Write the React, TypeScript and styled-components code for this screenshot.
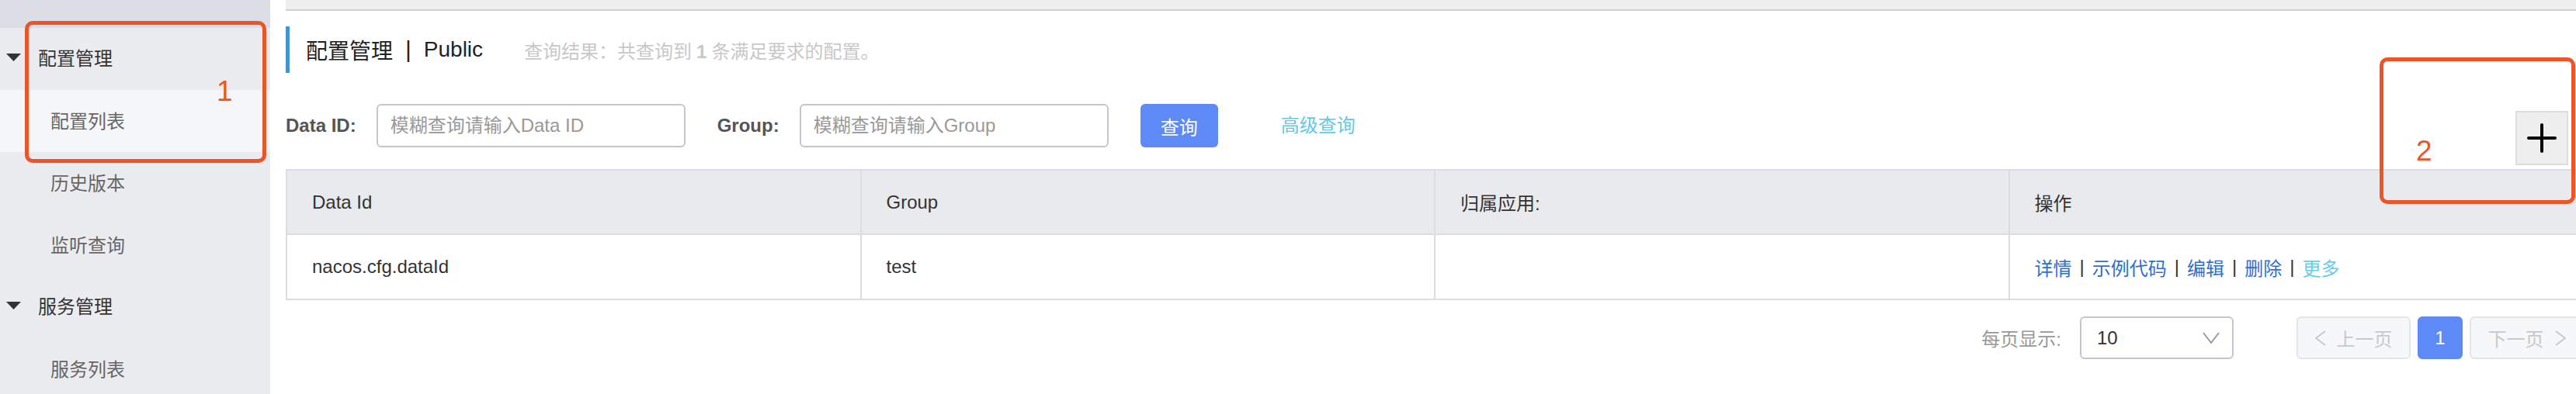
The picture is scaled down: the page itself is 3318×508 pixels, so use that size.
import React from 'react'
import styled, { createGlobalStyle } from 'styled-components'

const GlobalStyle = createGlobalStyle`
    html, body {
        margin: 0;
        padding: 0;
        background: #ffffff;
        overflow: hidden;
    }
    body {
        font-family: "Liberation Sans", "Noto Sans CJK SC", sans-serif;
    }
    * {
        box-sizing: border-box;
    }
`

const Page = styled.div`
    position: relative;
    display: flex;
    width: 3328px;
    height: 508px;
`

/* sidebar */

const Sidebar = styled.nav`
    width: 348px;
    flex-shrink: 0;
    background: #ebecf0;
`

const SidebarTop = styled.div`
    height: 36px;
    background: #dbdee5;
`

const NavGroup = styled.div`
    display: flex;
    align-items: center;
    gap: 22px;
    height: 80px;
    padding: 0 0 5px 8px;
    font-size: 24px;
    color: #333333;
`

const NavItem = styled.div<{ $active?: boolean }>`
    display: flex;
    align-items: center;
    height: 80px;
    padding: 0 0 4px 65px;
    font-size: 24px;
    color: #666666;
    background: ${(p) => (p.$active ? '#f5f6f8' : 'transparent')};
`

const Caret = () => (
    <svg width="19" height="10" viewBox="0 0 19 10">
        <polygon points="0,0 19,0 9.5,10" fill="#333333" />
    </svg>
)

/* main area */

const Main = styled.main`
    flex: 1;
    display: flex;
    flex-direction: column;
    padding-left: 20px;
`

const TopStrip = styled.div`
    height: 14px;
    background: #eeeeee;
    border-bottom: 2px solid #d0d0d0;
`

const TitleBar = styled.div`
    display: flex;
    align-items: center;
    height: 60px;
    margin-top: 20px;
    padding-left: 21px;
    border-left: 5px solid #3f95cc;
`

const TitleText = styled.span`
    font-size: 28px;
    color: #222222;
`

const TitleDivider = styled.span`
    margin: 0 16px;
    font-size: 30px;
    color: #222222;
`

const ResultText = styled.span`
    margin-left: 53px;
    font-size: 24px;
    color: #c8c8c8;

    strong {
        margin: 0 6px;
    }
`

const SearchRow = styled.div`
    display: flex;
    align-items: flex-start;
    margin-top: 40px;
`

const FieldLabel = styled.label`
    margin-right: 26px;
    font-size: 24px;
    font-weight: bold;
    line-height: 56px;
    color: #555555;
`

const TextInput = styled.input`
    width: 398px;
    height: 56px;
    margin-right: 41px;
    padding: 0 16px;
    border: 2px solid #c4c6cf;
    border-radius: 6px;
    font-family: inherit;
    font-size: 24px;
    color: #333333;
    outline: none;

    &::placeholder {
        color: #999999;
    }
`

const PrimaryButton = styled.button`
    width: 100px;
    height: 56px;
    border: none;
    border-radius: 6px;
    background: #5e8af7;
    color: #ffffff;
    font-family: inherit;
    font-size: 24px;
`

const LinkText = styled.a`
    margin-left: 81px;
    font-size: 24px;
    line-height: 56px;
    color: #66c8e3;
`

const AddButton = styled.button`
    display: flex;
    align-items: center;
    justify-content: center;
    width: 68px;
    height: 70px;
    margin: 9px 20px 0 auto;
    padding: 0;
    border: 2px solid #dddddd;
    background: #eeeeee;
`

const PlusIcon = () => (
    <svg width="38" height="38" viewBox="0 0 38 38">
        <path d="M19 2 V36 M2 19 H36" stroke="#000000" strokeWidth="4" strokeLinecap="round" />
    </svg>
)

/* table */

const Table = styled.div`
    display: grid;
    grid-template-columns: repeat(4, 1fr);
    margin-top: 5px;
    border-top: 2px solid #dcdde2;
    border-left: 2px solid #dcdde2;
`

const Cell = styled.div<{ $head?: boolean }>`
    display: flex;
    align-items: center;
    height: ${(p) => (p.$head ? '83px' : '84px')};
    padding-left: 32px;
    border-right: 2px solid #dcdde2;
    border-bottom: 2px solid #dcdde2;
    background: ${(p) => (p.$head ? '#e9eaee' : '#ffffff')};
    font-size: 24px;
    color: #333333;
`

const ActionLink = styled.a<{ $muted?: boolean }>`
    color: ${(p) => (p.$muted ? '#6ccbe6' : '#2f6fd0')};
`

const ActionDivider = styled.span`
    margin: 0 10px;
    color: #333333;
`

/* pagination */

const Pager = styled.div`
    display: flex;
    align-items: center;
    justify-content: flex-end;
    height: 55px;
    margin-top: 21px;
`

const PagerLabel = styled.span`
    margin-right: 24px;
    font-size: 24px;
    color: #999999;
`

const SizeSelect = styled.div`
    display: flex;
    align-items: center;
    justify-content: space-between;
    width: 198px;
    height: 55px;
    padding: 0 16px 0 20px;
    border: 2px solid #c4c6cf;
    border-radius: 6px;
    font-size: 24px;
    color: #333333;
`

const PageButton = styled.div<{ $current?: boolean }>`
    display: flex;
    align-items: center;
    justify-content: center;
    gap: 14px;
    width: ${(p) => (p.$current ? '58px' : '147px')};
    height: 55px;
    border: 2px solid ${(p) => (p.$current ? '#5e8af7' : '#e4e5e9')};
    border-radius: 6px;
    background: ${(p) => (p.$current ? '#5e8af7' : '#f6f7f9')};
    font-size: 24px;
    color: ${(p) => (p.$current ? '#ffffff' : '#c8c8c8')};
`

const PrevButton = styled(PageButton)`
    margin-left: 81px;
`

const CurrentButton = styled(PageButton)`
    margin: 0 9px;
`

const Chevron = ({ dir }: { dir: 'left' | 'right' | 'down' }) => {
    if (dir === 'down') {
        return (
            <svg width="22" height="15" viewBox="0 0 22 15">
                <polyline points="1,1 11,14 21,1" fill="none" stroke="#999999" strokeWidth="2" />
            </svg>
        )
    }
    const pts = dir === 'left' ? '13,1 1,10 13,19' : '1,1 13,10 1,19'
    return (
        <svg width="14" height="20" viewBox="0 0 14 20">
            <polyline points={pts} fill="none" stroke="#c8c8c8" strokeWidth="2" />
        </svg>
    )
}

/* annotations drawn over the screenshot */

const Callout = styled.div<{ $x: number; $y: number; $w: number; $h: number }>`
    position: absolute;
    left: ${(p) => p.$x}px;
    top: ${(p) => p.$y}px;
    width: ${(p) => p.$w}px;
    height: ${(p) => p.$h}px;
    border: 5px solid #ef5326;
    border-radius: 10px;
    pointer-events: none;
`

const CalloutNumber = styled.span<{ $x: number; $y: number }>`
    position: absolute;
    left: ${(p) => p.$x}px;
    top: ${(p) => p.$y}px;
    font-size: 37px;
    line-height: 37px;
    color: #ef5326;
`

const columns = ['Data Id', 'Group', '归属应用:', '操作']
const actions = ['详情', '示例代码', '编辑', '删除']

const App = () => {
    return (
        <Page>
            <GlobalStyle />
            <Sidebar>
                <SidebarTop />
                <NavGroup>
                    <Caret />
                    配置管理
                </NavGroup>
                <NavItem $active>配置列表</NavItem>
                <NavItem>历史版本</NavItem>
                <NavItem>监听查询</NavItem>
                <NavGroup>
                    <Caret />
                    服务管理
                </NavGroup>
                <NavItem>服务列表</NavItem>
            </Sidebar>

            <Main>
                <TopStrip />
                <TitleBar>
                    <TitleText>配置管理</TitleText>
                    <TitleDivider>|</TitleDivider>
                    <TitleText>Public</TitleText>
                    <ResultText>
                        查询结果：共查询到<strong>1</strong>条满足要求的配置。
                    </ResultText>
                </TitleBar>

                <SearchRow>
                    <FieldLabel>Data ID:</FieldLabel>
                    <TextInput placeholder="模糊查询请输入Data ID" />
                    <FieldLabel>Group:</FieldLabel>
                    <TextInput placeholder="模糊查询请输入Group" />
                    <PrimaryButton>查询</PrimaryButton>
                    <LinkText>高级查询</LinkText>
                    <AddButton>
                        <PlusIcon />
                    </AddButton>
                </SearchRow>

                <Table>
                    {columns.map((c) => (
                        <Cell $head key={c}>
                            {c}
                        </Cell>
                    ))}
                    <Cell>nacos.cfg.dataId</Cell>
                    <Cell>test</Cell>
                    <Cell />
                    <Cell>
                        {actions.map((a) => (
                            <React.Fragment key={a}>
                                <ActionLink>{a}</ActionLink>
                                <ActionDivider>|</ActionDivider>
                            </React.Fragment>
                        ))}
                        <ActionLink $muted>更多</ActionLink>
                    </Cell>
                </Table>

                <Pager>
                    <PagerLabel>每页显示:</PagerLabel>
                    <SizeSelect>
                        10
                        <Chevron dir="down" />
                    </SizeSelect>
                    <PrevButton>
                        <Chevron dir="left" />
                        上一页
                    </PrevButton>
                    <CurrentButton $current>1</CurrentButton>
                    <PageButton>
                        下一页
                        <Chevron dir="right" />
                    </PageButton>
                </Pager>
            </Main>

            <Callout $x={32} $y={27} $w={311} $h={183} />
            <CalloutNumber $x={279} $y={99}>1</CalloutNumber>
            <Callout $x={3065} $y={74} $w={252} $h={189} />
            <CalloutNumber $x={3112} $y={176}>2</CalloutNumber>
        </Page>
    )
}

export default App
